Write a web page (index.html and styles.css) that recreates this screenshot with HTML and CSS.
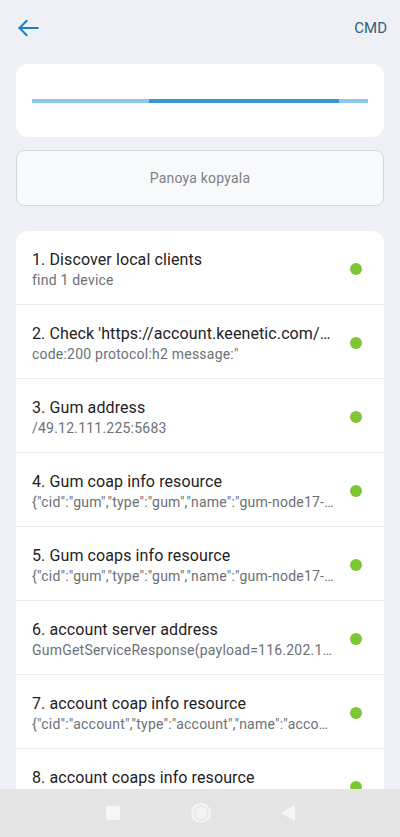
FILE: index.html
```html
<!DOCTYPE html>
<html lang="en">
<head>
<meta charset="utf-8">
<meta name="viewport" content="width=device-width, initial-scale=1">
<title>Diagnostics</title>
<link rel="stylesheet" href="styles.css">
</head>
<body>
<header class="topbar">
  <button class="back" aria-label="Back">
    <svg width="24" height="24" viewBox="0 0 24 24" fill="none" stroke="#1b80c4" stroke-width="2" stroke-linecap="square" stroke-linejoin="miter">
      <path d="M3.5 12H21.5"/>
      <path d="M10.5 5L3.5 12L10.5 19"/>
    </svg>
  </button>
  <span class="cmd">CMD</span>
</header>

<section class="card progress-card">
  <div class="bar">
    <span class="seg light lead"></span>
    <span class="seg dark"></span>
    <span class="seg light tail"></span>
  </div>
</section>

<button class="copy-btn">Panoya kopyala</button>

<ul class="card steps">
  <li class="step">
    <div class="text"><div class="title">1. Discover local clients</div><div class="sub">find 1 device</div></div>
    <span class="dot"></span>
  </li>
  <li class="step">
    <div class="text"><div class="title">2. Check 'https://account.keenetic.com/api/v1/status'</div><div class="sub">code:200 protocol:h2 message:"</div></div>
    <span class="dot"></span>
  </li>
  <li class="step">
    <div class="text"><div class="title">3. Gum address</div><div class="sub">/49.12.111.225:5683</div></div>
    <span class="dot"></span>
  </li>
  <li class="step">
    <div class="text"><div class="title">4. Gum coap info resource</div><div class="sub">{"cid":"gum","type":"gum","name":"gum-node17-fsn1","version":"1.0"}</div></div>
    <span class="dot"></span>
  </li>
  <li class="step">
    <div class="text"><div class="title">5. Gum coaps info resource</div><div class="sub">{"cid":"gum","type":"gum","name":"gum-node17-fsn1","version":"1.0"}</div></div>
    <span class="dot"></span>
  </li>
  <li class="step">
    <div class="text"><div class="title">6. account server address</div><div class="sub">GumGetServiceResponse(payload=116.202.111.5:5683)</div></div>
    <span class="dot"></span>
  </li>
  <li class="step">
    <div class="text"><div class="title">7. account coap info resource</div><div class="sub">{"cid":"account","type":"account","name":"account-node1"}</div></div>
    <span class="dot"></span>
  </li>
  <li class="step">
    <div class="text"><div class="title">8. account coaps info resource</div><div class="sub">{"cid":"account","type":"account","name":"account-node1"}</div></div>
    <span class="dot"></span>
  </li>
</ul>

<nav class="sysnav">
  <span class="nav-square"></span>
  <span class="nav-circle"></span>
  <svg class="nav-back" width="14" height="16" viewBox="0 0 14 16"><path d="M13.5 0.5V15.5L0.5 8Z" fill="#f6f6f6" stroke="#f6f6f6" stroke-linejoin="round"/></svg>
</nav>
</body>
</html>
```

FILE: styles.css
```css
* { box-sizing: border-box; }

html, body {
  margin: 0;
  padding: 0;
}

body {
  background: #eff0f5;
  font-family: Roboto, "Noto Sans", "Liberation Sans", sans-serif;
  color: #1f2124;
  padding-bottom: 60px;
}

.topbar {
  height: 56px;
  display: flex;
  align-items: center;
  justify-content: space-between;
  padding: 0 13px 0 16px;
}

.back {
  width: 24px;
  height: 24px;
  padding: 0;
  border: 0;
  background: none;
  display: flex;
}

.cmd {
  font-size: 15px;
  font-weight: 400;
  color: #30607f;
}

.card {
  background: #fff;
  border-radius: 12px;
  margin: 0 16px;
}

.progress-card {
  margin-top: 8px;
  padding: 35px 16px 34px;
}

.bar {
  height: 4px;
  display: flex;
}

.seg { height: 100%; }
.light { background: #8ec6ec; }
.dark { background: #3796d4; }
.lead { width: 117px; }
.seg.dark { width: 190px; }
.tail { flex: 1; }

.copy-btn {
  display: block;
  width: calc(100% - 32px);
  margin: 13px 16px 0;
  height: 56px;
  background: #f8f9fa;
  border: 1px solid #d3d5d9;
  border-radius: 8px;
  font-family: inherit;
  font-size: 14px;
  letter-spacing: 0.2px;
  color: #7c8088;
}

.steps {
  list-style: none;
  margin-top: 25px;
  padding: 0;
  overflow: hidden;
}

.step {
  display: flex;
  align-items: center;
  gap: 16px;
  padding: 18px 22px 15px 16px;
  border-bottom: 1px solid #eceef1;
}

.text {
  flex: 1;
  min-width: 0;
}

.title, .sub {
  white-space: nowrap;
  overflow: hidden;
  text-overflow: ellipsis;
}

.title {
  font-size: 16px;
  line-height: 22px;
  letter-spacing: 0.1px;
  color: #1f2124;
}

.sub {
  font-size: 14px;
  line-height: 18px;
  letter-spacing: 0.22px;
  color: #6c7077;
}

.dot {
  flex: none;
  width: 12px;
  height: 12px;
  border-radius: 50%;
  background: #7dc734;
  margin-top: -1px;
}

.sysnav {
  position: fixed;
  left: 0;
  right: 0;
  bottom: 0;
  height: 48px;
  background: #e4e4e4;
  display: flex;
  align-items: center;
  justify-content: center;
}

.nav-square {
  width: 14px;
  height: 14px;
  border-radius: 2px;
  background: #f6f6f6;
  margin-right: 71px;
}

.nav-circle {
  width: 20px;
  height: 20px;
  border-radius: 50%;
  border: 2px solid #f6f6f6;
  box-shadow: inset 0 0 0 2px #e8e8e8, inset 0 0 0 8px #f3f3f3;
  margin-right: 70px;
}

.nav-back {
  display: block;
}
```
